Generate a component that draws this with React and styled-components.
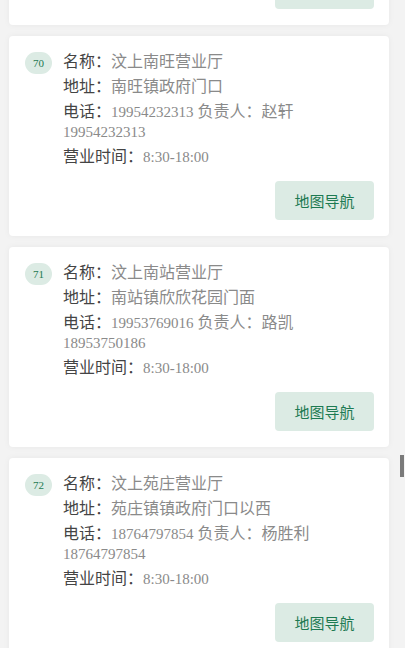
import React, { useLayoutEffect, useRef } from 'react';
import styled, { createGlobalStyle } from 'styled-components';

const GlobalStyle = createGlobalStyle`
  html, body {
    margin: 0;
    padding: 0;
    background: #f3f3f3;
  }
  body {
    font-family: "Liberation Serif", "Noto Sans CJK SC", serif;
  }
`;

const Page = styled.div`
  position: relative;
  height: 100vh;
`;

const Scroller = styled.div`
  height: 100%;
  overflow-y: auto;
  scrollbar-width: none;

  &::-webkit-scrollbar {
    display: none;
  }
`;

const ScrollThumb = styled.div`
  position: absolute;
  right: 1px;
  top: 455px;
  width: 4px;
  height: 22px;
  background: #7a7a7a;
`;

const List = styled.div`
  display: flex;
  flex-direction: column;
  gap: 11px;
  padding: 11px 16px 11px 9px;
`;

const Card = styled.div`
  background: #fff;
  border-radius: 4px;
  box-shadow: 0 0 6px rgba(0, 0, 0, 0.05);
  padding: 16px 15px 16px 16px;
  display: flex;
  flex-direction: column;
  gap: 14px;
`;

const Top = styled.div`
  display: flex;
  gap: 11px;
  align-items: flex-start;
`;

const Badge = styled.span`
  flex: none;
  width: 27px;
  height: 22px;
  border-radius: 11px;
  background: #dcebe4;
  color: #1d7a52;
  font-size: 11px;
  display: flex;
  align-items: center;
  justify-content: center;
`;

const Info = styled.div`
  display: flex;
  flex-direction: column;
  gap: 5px;
  flex: 1;
  min-width: 0;
`;

const Row = styled.div`
  font-size: 16px;
  line-height: 20px;
  color: #8a8a8a;
`;

const Label = styled.span`
  color: #444;
`;

const Num = styled.span`
  font-size: 15px;
`;

const Footer = styled.div`
  display: flex;
  justify-content: flex-end;
`;

const NavButton = styled.button`
  width: 99px;
  height: 39px;
  border: none;
  border-radius: 4px;
  background: #dcebe4;
  color: #1d7a52;
  font-family: "Noto Sans CJK SC", sans-serif;
  font-size: 15px;
  padding: 0;
  cursor: pointer;
`;

const stores = [
  { no: 69, name: '汶上康驿营业厅', addr: '康驿镇政府驻地', phone: '19954232316', boss: '王强', mobile: '19954232316' },
  { no: 70, name: '汶上南旺营业厅', addr: '南旺镇政府门口', phone: '19954232313', boss: '赵轩', mobile: '19954232313' },
  { no: 71, name: '汶上南站营业厅', addr: '南站镇欣欣花园门面', phone: '19953769016', boss: '路凯', mobile: '18953750186' },
  { no: 72, name: '汶上苑庄营业厅', addr: '苑庄镇镇政府门口以西', phone: '18764797854', boss: '杨胜利', mobile: '18764797854' },
];

const StoreCard = ({ store }) => (
  <Card data-no={store.no}>
    <Top>
      <Badge>{store.no}</Badge>
      <Info>
        <Row>
          <Label>名称：</Label>
          {store.name}
        </Row>
        <Row>
          <Label>地址：</Label>
          {store.addr}
        </Row>
        <Row>
          <Label>电话：</Label>
          <Num>{store.phone}</Num> 负责人：{store.boss} <Num>{store.mobile}</Num>
        </Row>
        <Row>
          <Label>营业时间：</Label>
          <Num>8:30-18:00</Num>
        </Row>
      </Info>
    </Top>
    <Footer>
      <NavButton>地图导航</NavButton>
    </Footer>
  </Card>
);

const App = () => {
  const ref = useRef(null);

  useLayoutEffect(() => {
    const el = ref.current;
    if (!el) return;
    const target = el.querySelector('[data-no="70"]');
    if (target) el.scrollTop = target.offsetTop - 36;
  }, []);

  return (
    <>
      <GlobalStyle />
      <Page>
        <Scroller ref={ref}>
          <List>
            {stores.map((s) => (
              <StoreCard key={s.no} store={s} />
            ))}
          </List>
        </Scroller>
        <ScrollThumb />
      </Page>
    </>
  );
};

export default App;
